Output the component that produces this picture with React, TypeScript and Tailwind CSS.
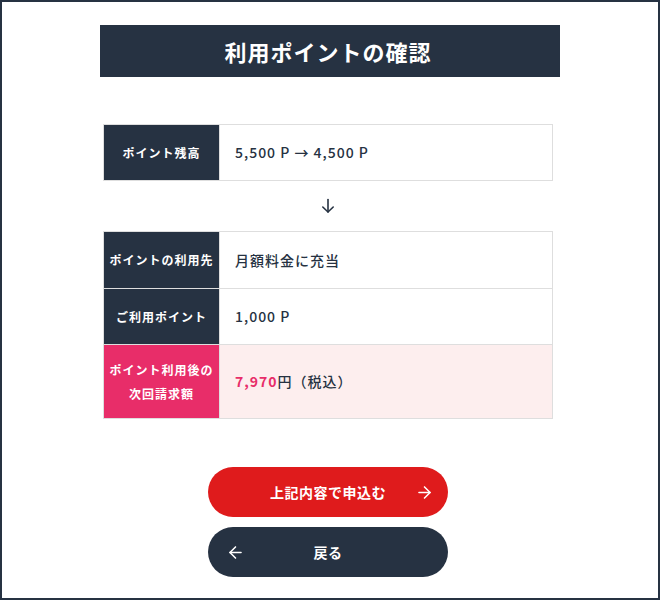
import { ArrowRight, ArrowLeft } from "lucide-react";

const font = { fontFamily: '"Noto Sans CJK JP", "Noto Sans", sans-serif' };

function Row({
  label,
  children,
  highlight = false,
  first = false,
  height = "h-[56px]",
}: {
  label: React.ReactNode;
  children: React.ReactNode;
  highlight?: boolean;
  first?: boolean;
  height?: string;
}) {
  return (
    <div className={`flex ${first ? "" : "border-t border-[#dedede]"} ${height}`}>
      <div
        className={`w-[115px] shrink-0 flex items-center justify-center text-center text-[12px] font-bold leading-[24px] tracking-[1px] text-white ${
          highlight ? "bg-[#e82d69]" : "bg-[#263242]"
        }`}
      >
        {label}
      </div>
      <div
        className={`flex-1 flex items-center pl-[15px] text-[14px] font-medium tracking-[1px] text-[#263242] border-l border-[#dedede] ${
          highlight ? "bg-[#fdeeee]" : "bg-white"
        }`}
      >
        {children}
      </div>
    </div>
  );
}

export default function App() {
  return (
    <div style={font} className="w-[660px] h-[600px] border-2 border-[#263242] bg-white">
      {/* Title */}
      <div className="ml-[98px] mt-[23px] w-[460px] h-[52px] bg-[#263242] flex items-center justify-center pr-[4px]">
        <h1 className="text-[22px] font-bold text-white tracking-[1px]">利用ポイントの確認</h1>
      </div>

      <div className="ml-[101px] w-[450px]">
        {/* Point balance */}
        <div className="mt-[47px] border border-[#dedede]">
          <Row label="ポイント残高" first height="h-[55px]">
            5,500 P → 4,500 P
          </Row>
        </div>

        <div className="h-[50px] flex items-center justify-center text-[#263242]">
          <svg width="14" height="16" viewBox="0 0 14 16" fill="none" stroke="currentColor" strokeWidth="1.6" strokeLinecap="round" strokeLinejoin="round">
            <path d="M7 1.5v12.5" />
            <path d="M1.8 9l5.2 5 5.2-5" />
          </svg>
        </div>

        {/* Usage details */}
        <div className="border border-[#dedede]">
          <Row label="ポイントの利用先" first>
            月額料金に充当
          </Row>
          <Row label="ご利用ポイント">1,000 P</Row>
          <Row
            label={
              <span>
                ポイント利用後の
                <br />
                次回請求額
              </span>
            }
            highlight
            height="h-[74px]"
          >
            <span className="font-bold text-[#e82d69]">7,970</span>
            <span>円（税込）</span>
          </Row>
        </div>
      </div>

      {/* Buttons */}
      <div className="mt-[48px] ml-[206px] w-[240px] flex flex-col gap-[10px]">
        <button className="relative h-[50px] w-full rounded-full bg-[#df1b1c] text-white text-[14px] font-bold tracking-[0.5px] flex items-center justify-center">
          上記内容で申込む
          <ArrowRight className="absolute right-[14px] w-[19px] h-[19px]" strokeWidth={2} />
        </button>
        <button className="relative h-[50px] w-full rounded-full bg-[#263242] text-white text-[14px] font-bold tracking-[0.5px] flex items-center justify-center">
          <ArrowLeft className="absolute left-[18px] w-[19px] h-[19px]" strokeWidth={2} />
          戻る
        </button>
      </div>
    </div>
  );
}
